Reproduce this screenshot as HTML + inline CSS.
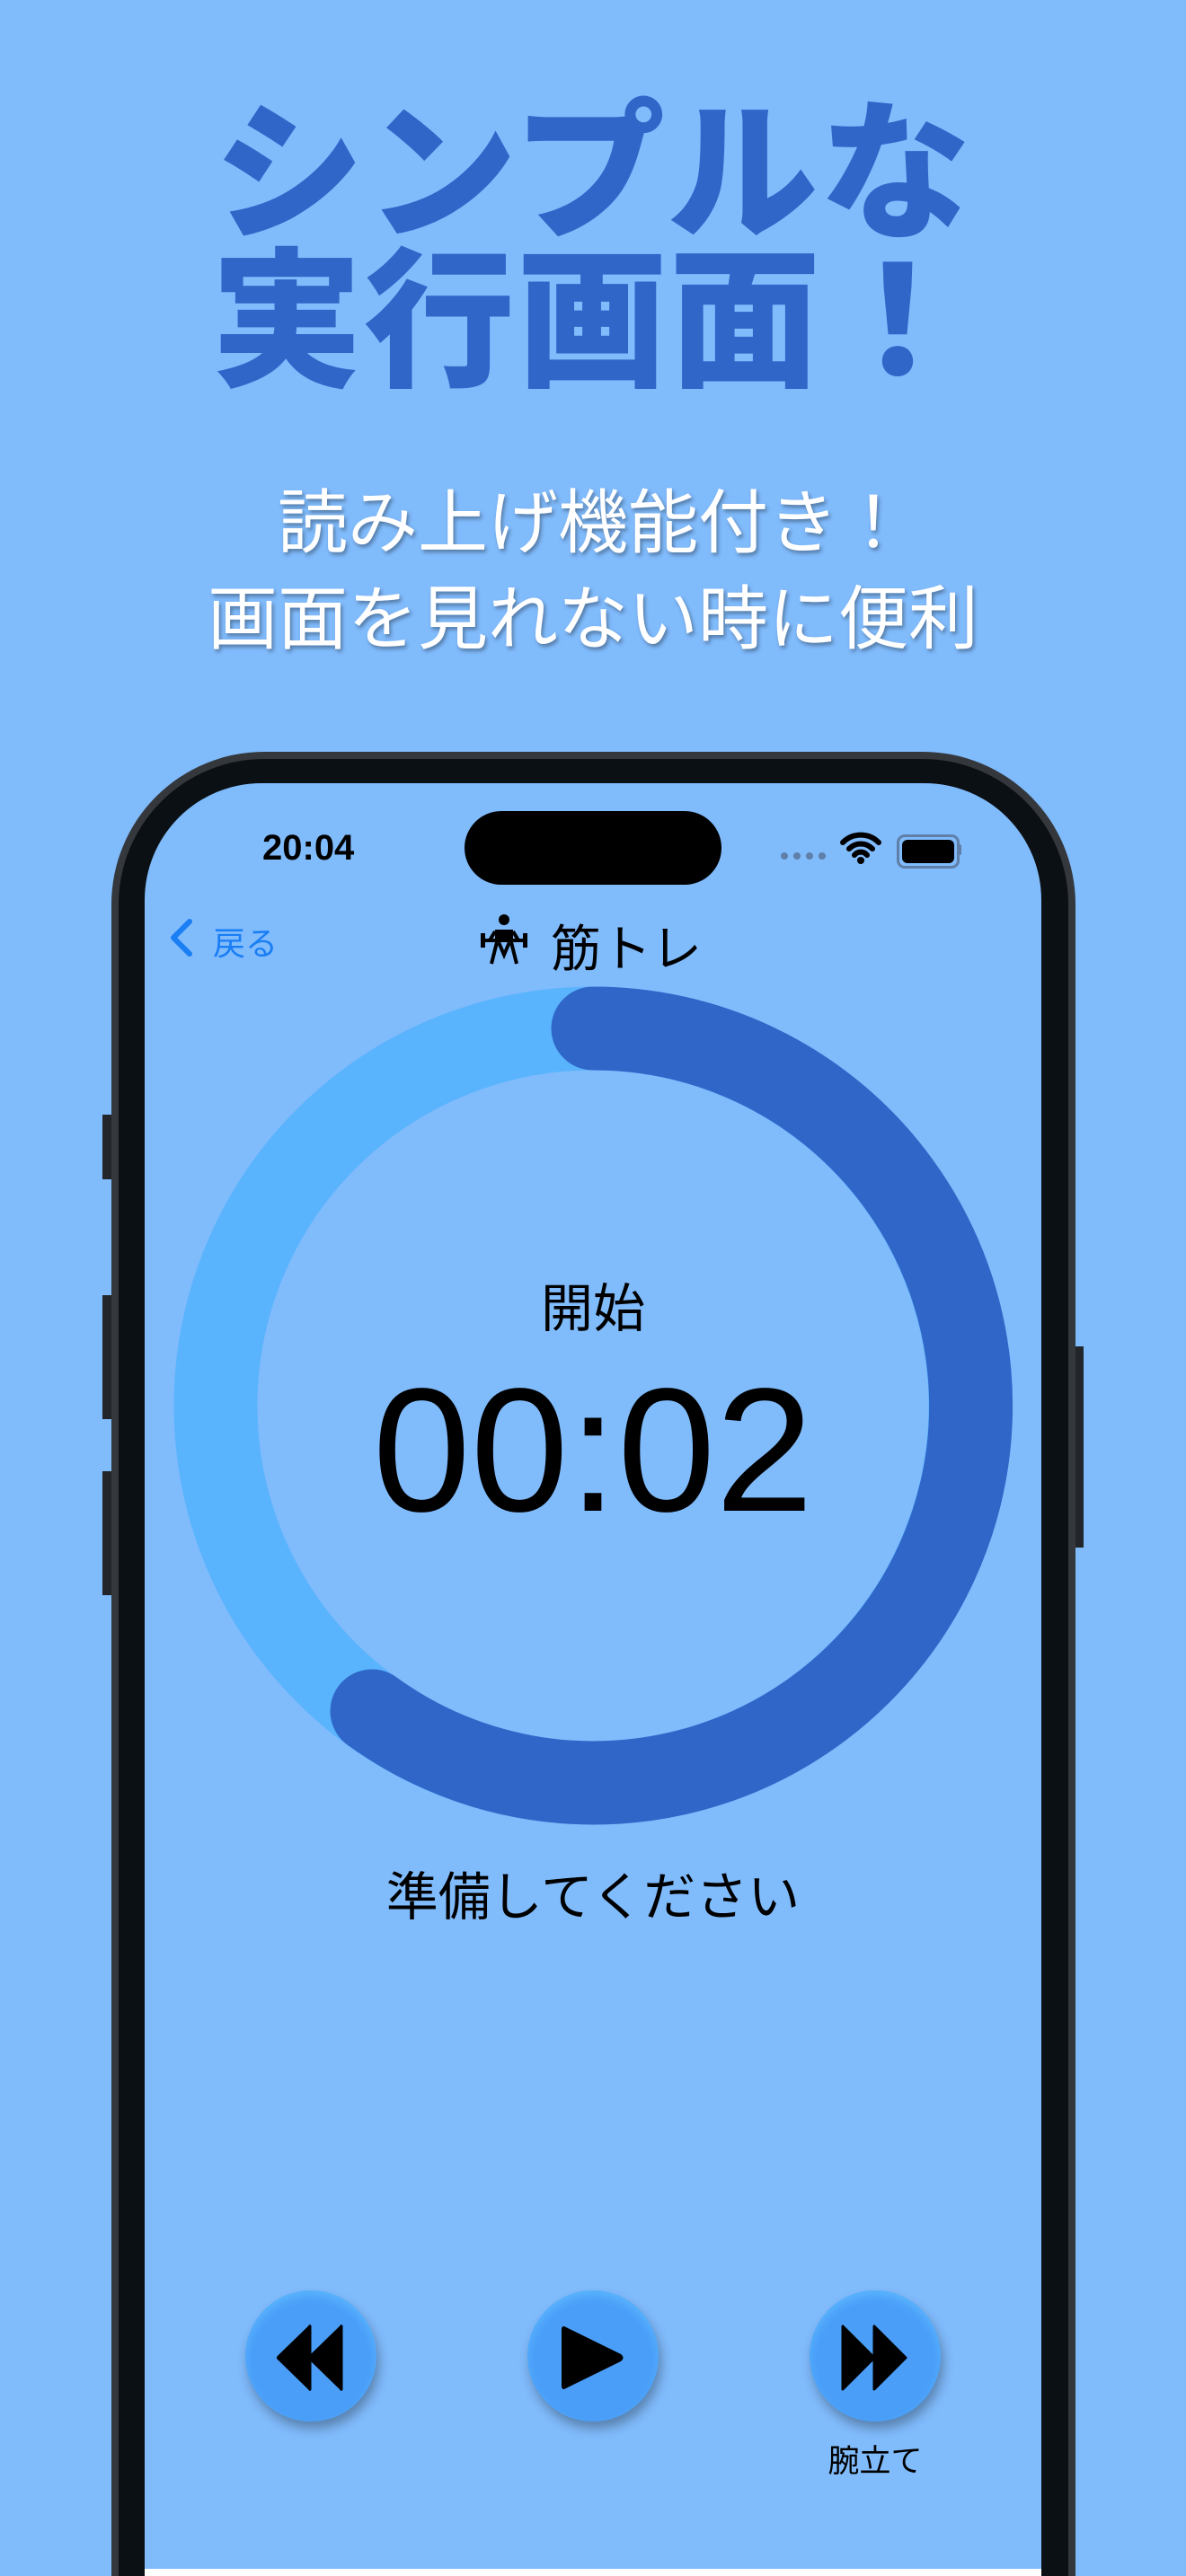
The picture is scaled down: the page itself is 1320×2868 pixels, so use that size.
<!DOCTYPE html>
<html style="height:2868px;overflow:hidden"><head><meta charset="utf-8"><style>
body{margin:0;width:1320px;height:2868px;overflow:hidden;background:#80bbfc;position:relative;font-family:"Liberation Sans","Noto Sans CJK JP",sans-serif}
.a{position:absolute}
.t{left:0;width:1320px;text-align:center;color:#2f66c8;font-weight:900;font-size:168px;line-height:1;letter-spacing:2px}
.s{left:0;width:1320px;text-align:center;color:#fff;font-size:78px;line-height:1;text-shadow:2px 3px 4px rgba(0,0,0,.35)}
.frame{left:124px;top:837px;width:1073px;height:2031px;border-radius:170px 170px 0 0;background:#0b1014;box-sizing:border-box;border:8px solid #34383c;border-bottom:0}
.screen{left:161px;top:872px;width:998px;height:1996px;border-radius:130px 130px 0 0;background:#80bbfc;overflow:hidden}
.btn{width:146px;height:146px;border-radius:50%;background:#4a9ef8;box-shadow:3px 8px 12px rgba(0,0,0,.3),inset 0 6px 10px #5ab4fd}
.side{background:#22262a;width:10px}
</style></head><body>
<div class="a t" style="top:110px">シンプルな</div>
<div class="a t" style="top:275px">実行画面！</div>
<div class="a s" style="top:543px">読み上げ機能付き！</div>
<div class="a s" style="top:650px">画面を見れない時に便利</div>

<div class="a side" style="left:114px;top:1241px;height:72px"></div>
<div class="a side" style="left:114px;top:1442px;height:138px"></div>
<div class="a side" style="left:114px;top:1638px;height:138px"></div>
<div class="a side" style="left:1196px;top:1499px;height:224px"></div>
<div class="a frame"></div>
<div class="a screen">
 <div class="a" style="left:131px;top:50px;font-size:40px;font-weight:bold;color:#000">20:04</div>
 <div class="a" style="left:356px;top:31px;width:286px;height:82px;border-radius:41px;background:#000"></div>
 <div class="a" style="left:708px;top:77px;width:50px;height:8px;border-top:8px dotted #5f7fa8"></div>
 <svg class="a" style="left:774px;top:53px" width="46" height="38" viewBox="0 0 46 38"><path d="M3 13a28 28 0 0 1 40 0M10 20a18 18 0 0 1 26 0M16 27a9 9 0 0 1 14 0" stroke="#000" stroke-width="6" fill="none" stroke-linecap="round"/><circle cx="23" cy="33" r="4"/></svg>
 <div class="a" style="left:837px;top:57px;width:58px;height:26px;border:3px solid #5f7fa8;border-radius:9px;padding:3px;box-sizing:content-box"><div style="width:58px;height:26px;background:#000;border-radius:6px"></div></div>
 <div class="a" style="left:905px;top:68px;width:4px;height:12px;background:#5f7fa8;border-radius:2px"></div>
 <svg class="a" style="left:26px;top:150px" width="30" height="44" viewBox="0 0 30 44"><path d="M24 4L6 22l18 18" stroke="#1a7ef5" stroke-width="6" fill="none" stroke-linecap="round" stroke-linejoin="round"/></svg>
 <div class="a" style="left:76px;top:150px;font-size:36px;color:#1a7ef5">戻る</div>
 <svg class="a" style="left:370px;top:145px" width="60" height="60" viewBox="0 0 60 60"><circle cx="30" cy="7" r="6"/><path d="M20 18h20v14H20z"/><path d="M20 20L14 30M40 20l6 10M4 30h52M22 32l-6 24M38 32l6 24M24 32l6 14 6-14" stroke="#000" stroke-width="4" fill="none"/><rect x="4" y="22" width="5" height="16"/><rect x="51" y="22" width="5" height="16"/></svg>
 <div class="a" style="left:452px;top:140px;font-size:56px;color:#000">筋トレ</div>
 <svg class="a" style="left:0;top:0" width="998" height="1990"><g transform="translate(499,693)"><circle r="420" fill="none" stroke="#5ab4fd" stroke-width="93"/><path d="M0 -420A420 420 0 1 1 -246 340" fill="none" stroke="#2f66c8" stroke-width="93" stroke-linecap="round"/></g></svg>
 <div class="a" style="left:0;width:998px;top:538px;text-align:center;font-size:58px;color:#000">開始</div>
 <div class="a" style="left:0;width:998px;top:645px;text-align:center;font-size:196px;color:#000;line-height:1">00:02</div>
 <div class="a" style="left:0;width:998px;top:1193px;text-align:center;font-size:58px;color:#000">準備してください</div>
 <div class="a btn" style="left:112px;top:1678px"></div>
 <div class="a btn" style="left:426px;top:1678px"></div>
 <div class="a btn" style="left:740px;top:1678px"></div>
 <svg class="a" style="left:147px;top:1716px" width="74" height="74" viewBox="0 0 74 74"><path d="M37 2Q37 1 36 3L2 36Q1 37 2 38L36 71Q37 73 37 72zM72 2Q72 1 71 3L37 36Q36 37 37 38L71 71Q72 73 72 72z" stroke="#000" stroke-width="3" stroke-linejoin="round"/></svg>
 <svg class="a" style="left:462px;top:1716px" width="74" height="74" viewBox="0 0 74 74"><path d="M7 3Q2 0 2 6L2 68Q2 74 7 71L68 41Q73 37 68 33z"/></svg>
 <svg class="a" style="left:775px;top:1716px" width="74" height="74" viewBox="0 0 74 74"><path d="M2 2L2 72 37 37zM37 2L37 72 72 37z" stroke="#000" stroke-width="3" stroke-linejoin="round"/></svg>
 <div class="a" style="left:740px;width:146px;top:1840px;text-align:center;font-size:35px;color:#000">腕立て</div>
 <div class="a" style="left:0;top:1988px;width:998px;height:10px;background:#fff"></div>
</div>
</body></html>
